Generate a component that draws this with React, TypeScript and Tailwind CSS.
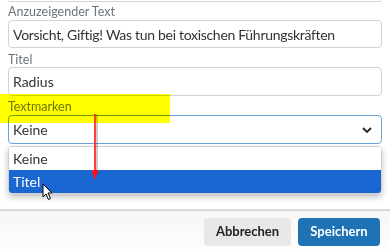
export default function App() {
  return (
    <div className="relative w-[390px] h-[252px] overflow-hidden bg-white font-['Lato',sans-serif]">
      <div className="px-2">
        {/* previous field edge */}
        <div className="h-[2px] border-b border-[#ced4da] rounded-b" />

        <label className="block mt-[3px] text-[12.5px] leading-[14px] text-[#6c757d]">Anzuzeigender Text</label>
        <div className="mt-[1px] h-[28px] flex items-center px-[4px] border border-[#ced4da] rounded text-[14px] tracking-[-0.3px] text-[#333] whitespace-nowrap">
          Vorsicht, Giftig! Was tun bei toxischen Führungskräften
        </div>

        <label className="block mt-[5px] text-[12.5px] leading-[14px] text-[#6c757d]">Titel</label>
        <div className="h-[29px] flex items-center px-[4px] border border-[#ced4da] rounded text-[14px] text-[#333]">
          Radius
        </div>

        <label className="block mt-[4px] text-[12.5px] leading-[14px] text-[#6c757d]">Textmarken</label>
        <div className="mt-[1px] h-[29px] flex items-center justify-between px-[4px] border border-[#6aa3d8] rounded text-[14px] text-[#333]">
          <span>Keine</span>
          <svg width="12" height="8" viewBox="0 0 12 8" className="mr-[4px]">
            <path d="M2 2 L6 6 L10 2" fill="none" stroke="#222" strokeWidth="1.8" />
          </svg>
        </div>

        {/* open dropdown list */}
        <div className="mt-[2px] rounded border border-[#d0d0d0] overflow-hidden shadow-[0_3px_6px_rgba(0,0,0,0.25)] text-[14px]">
          <div className="h-[23px] flex items-center px-[4px] bg-white text-[#333]">Keine</div>
          <div className="h-[23px] flex items-center px-[4px] bg-[#1a67d2] text-white">Titel</div>
        </div>
      </div>

      {/* footer */}
      <div className="mt-[15px] border-t-2 border-[#d8d8d8] h-[50px] bg-gradient-to-b from-[#f6f6f6] to-white flex justify-end items-start gap-[7px] pt-[7px] pr-[10px]">
        <button className="h-[28px] w-[87px] rounded bg-[#e8e8e8] text-[13px] font-bold text-[#222]">Abbrechen</button>
        <button className="h-[28px] w-[82px] rounded bg-[#1f72b3] text-[13px] font-bold text-white">Speichern</button>
      </div>

      {/* highlighter marker */}
      <div className="absolute left-0 top-[94px] w-[170px] h-[29px] bg-[#ffff00] mix-blend-multiply" />

      {/* red annotation arrow */}
      <svg className="absolute left-[88px] top-[112px]" width="16" height="72" viewBox="0 0 16 72">
        <line x1="9" y1="2" x2="9" y2="62" stroke="rgba(0,0,0,0.2)" strokeWidth="2" />
        <line x1="7" y1="2" x2="7" y2="60" stroke="#ff1010" strokeWidth="1.6" />
        <path d="M3.5 58 L7 68 L10.5 58 Z" fill="#ff1010" />
      </svg>

      {/* mouse cursor */}
      <svg className="absolute left-[42px] top-[183px]" width="12" height="18" viewBox="0 0 12 18">
        <path d="M1 1 L1 14 L4 11 L6.5 16.5 L8.5 15.5 L6 10 L10 10 Z" fill="#fff" stroke="#000" strokeWidth="1" strokeLinejoin="round" />
      </svg>
    </div>
  );
}
